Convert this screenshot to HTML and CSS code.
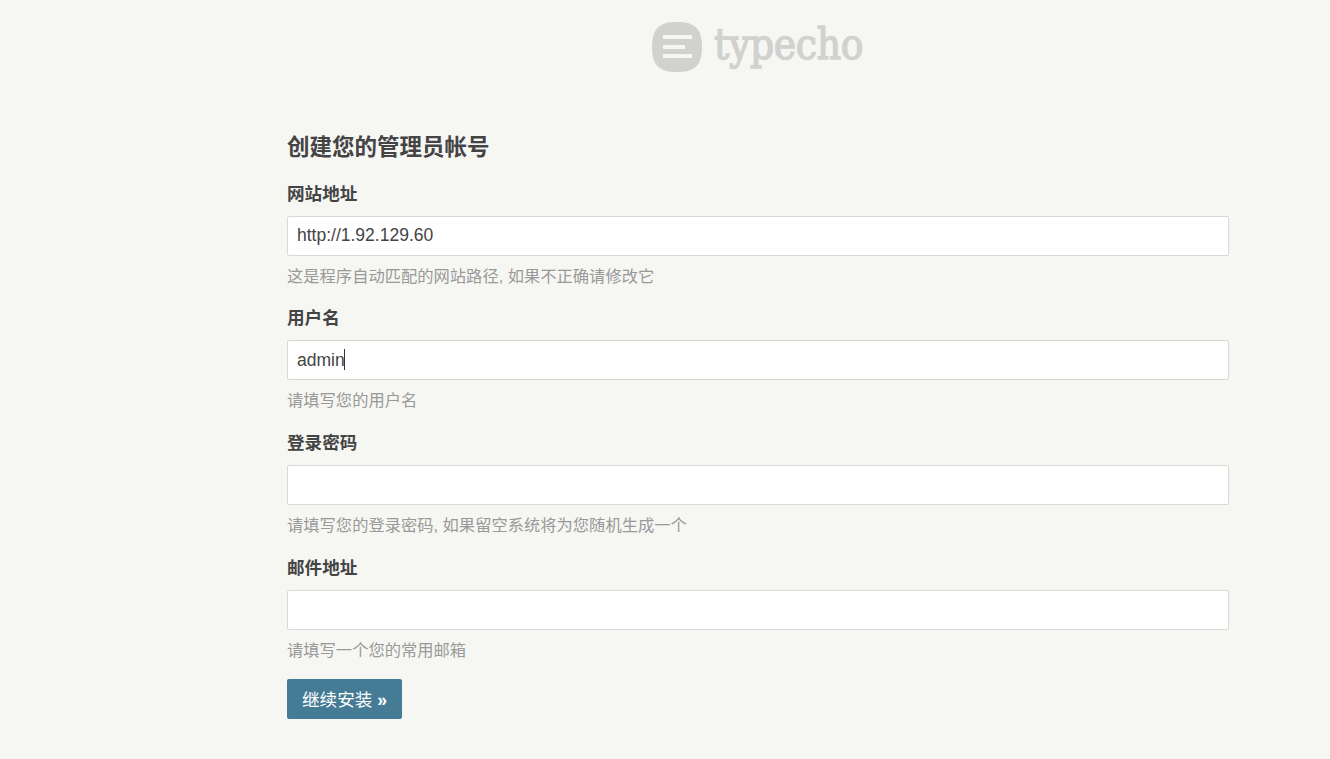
FILE: index.html
```html
<!DOCTYPE html>
<html lang="zh-CN">
<head>
<meta charset="utf-8">
<title>Typecho 安装程序</title>
<link rel="stylesheet" href="styles.css">
</head>
<body>
<header class="brand">
  <svg class="brand-icon" width="50" height="50" viewBox="0 0 50 50" aria-hidden="true">
    <path fill="#d1d1cf" d="M25 0C41 0 50 5 50 25C50 45 41 50 25 50C9 50 0 45 0 25C0 5 9 0 25 0Z"/>
    <path fill="#f6f6f3" d="M11 13H40V17H11ZM11 23H33V27H11ZM11 32H40V36H11Z"/>
  </svg>
  <span class="brand-name">typecho</span>
</header>
<main class="page">
  <form class="setup">
    <h2 class="title">创建您的管理员帐号</h2>
    <div class="field">
      <label class="label">网站地址</label>
      <input class="input" type="text" value="http://1.92.129.60">
      <p class="hint">这是程序自动匹配的网站路径, 如果不正确请修改它</p>
    </div>
    <div class="field">
      <label class="label">用户名</label>
      <div class="input-wrap">
        <input class="input" type="text" value="admin">
        <span class="caret"></span>
      </div>
      <p class="hint">请填写您的用户名</p>
    </div>
    <div class="field">
      <label class="label">登录密码</label>
      <input class="input" type="password">
      <p class="hint">请填写您的登录密码, 如果留空系统将为您随机生成一个</p>
    </div>
    <div class="field">
      <label class="label">邮件地址</label>
      <input class="input" type="text">
      <p class="hint">请填写一个您的常用邮箱</p>
    </div>
    <button class="submit" type="button">继续安装 <b>&raquo;</b></button>
  </form>
</main>
</body>
</html>
```
FILE: styles.css
```css
* { box-sizing: border-box; }
html, body { margin: 0; padding: 0; }
body {
  height: 759px;
  overflow: hidden;
  background: #f6f6f3;
  color: #444;
  font-family: "Liberation Sans", "Noto Sans CJK SC", sans-serif;
  font-size: 16px;
}
.brand {
  display: flex;
  align-items: center;
  gap: 12px;
  height: 50px;
  margin-top: 22px;
  padding-left: 652px;
}
.brand-icon { flex: none; }
.brand-name {
  margin-bottom: 5px;
  font-family: "DejaVu Serif Condensed", "DejaVu Serif", serif;
  font-size: 42px;
  font-weight: 400;
  line-height: 50px;
  letter-spacing: -0.3px;
  color: #d1d1cf;
  -webkit-text-stroke: 1.3px #d1d1cf;
}
.page {
  width: 942px;
  margin: 0 0 0 287px;
}
.title {
  margin: 0;
  padding-top: 61px;
  font-size: 22.5px;
  line-height: 30px;
  font-weight: 700;
  color: #444;
}
.field { margin-top: 14.67px; }
.label {
  display: block;
  font-size: 17.6px;
  line-height: 32px;
  font-weight: 700;
  color: #444;
  margin-bottom: 6px;
}
.input-wrap { position: relative; }
.input {
  display: block;
  width: 100%;
  height: 40px;
  padding: 0 9px;
  background: #fff;
  border: 1px solid #d9d9d6;
  border-radius: 2px;
  font: inherit;
  font-size: 17.5px;
  color: #444;
  outline: none;
}
.caret {
  position: absolute;
  left: 57px;
  top: 9px;
  width: 1px;
  height: 21px;
  background: #333;
}
.hint {
  margin: 0;
  padding-top: 8px;
  font-size: 16.3px;
  line-height: 24px;
  color: #999;
}
.submit {
  display: block;
  width: 115px;
  height: 40px;
  margin-top: 17px;
  padding: 0;
  border: 0;
  border-radius: 2px;
  background: #467b96;
  color: #fff;
  font: inherit;
  font-size: 17.6px;
}
```
